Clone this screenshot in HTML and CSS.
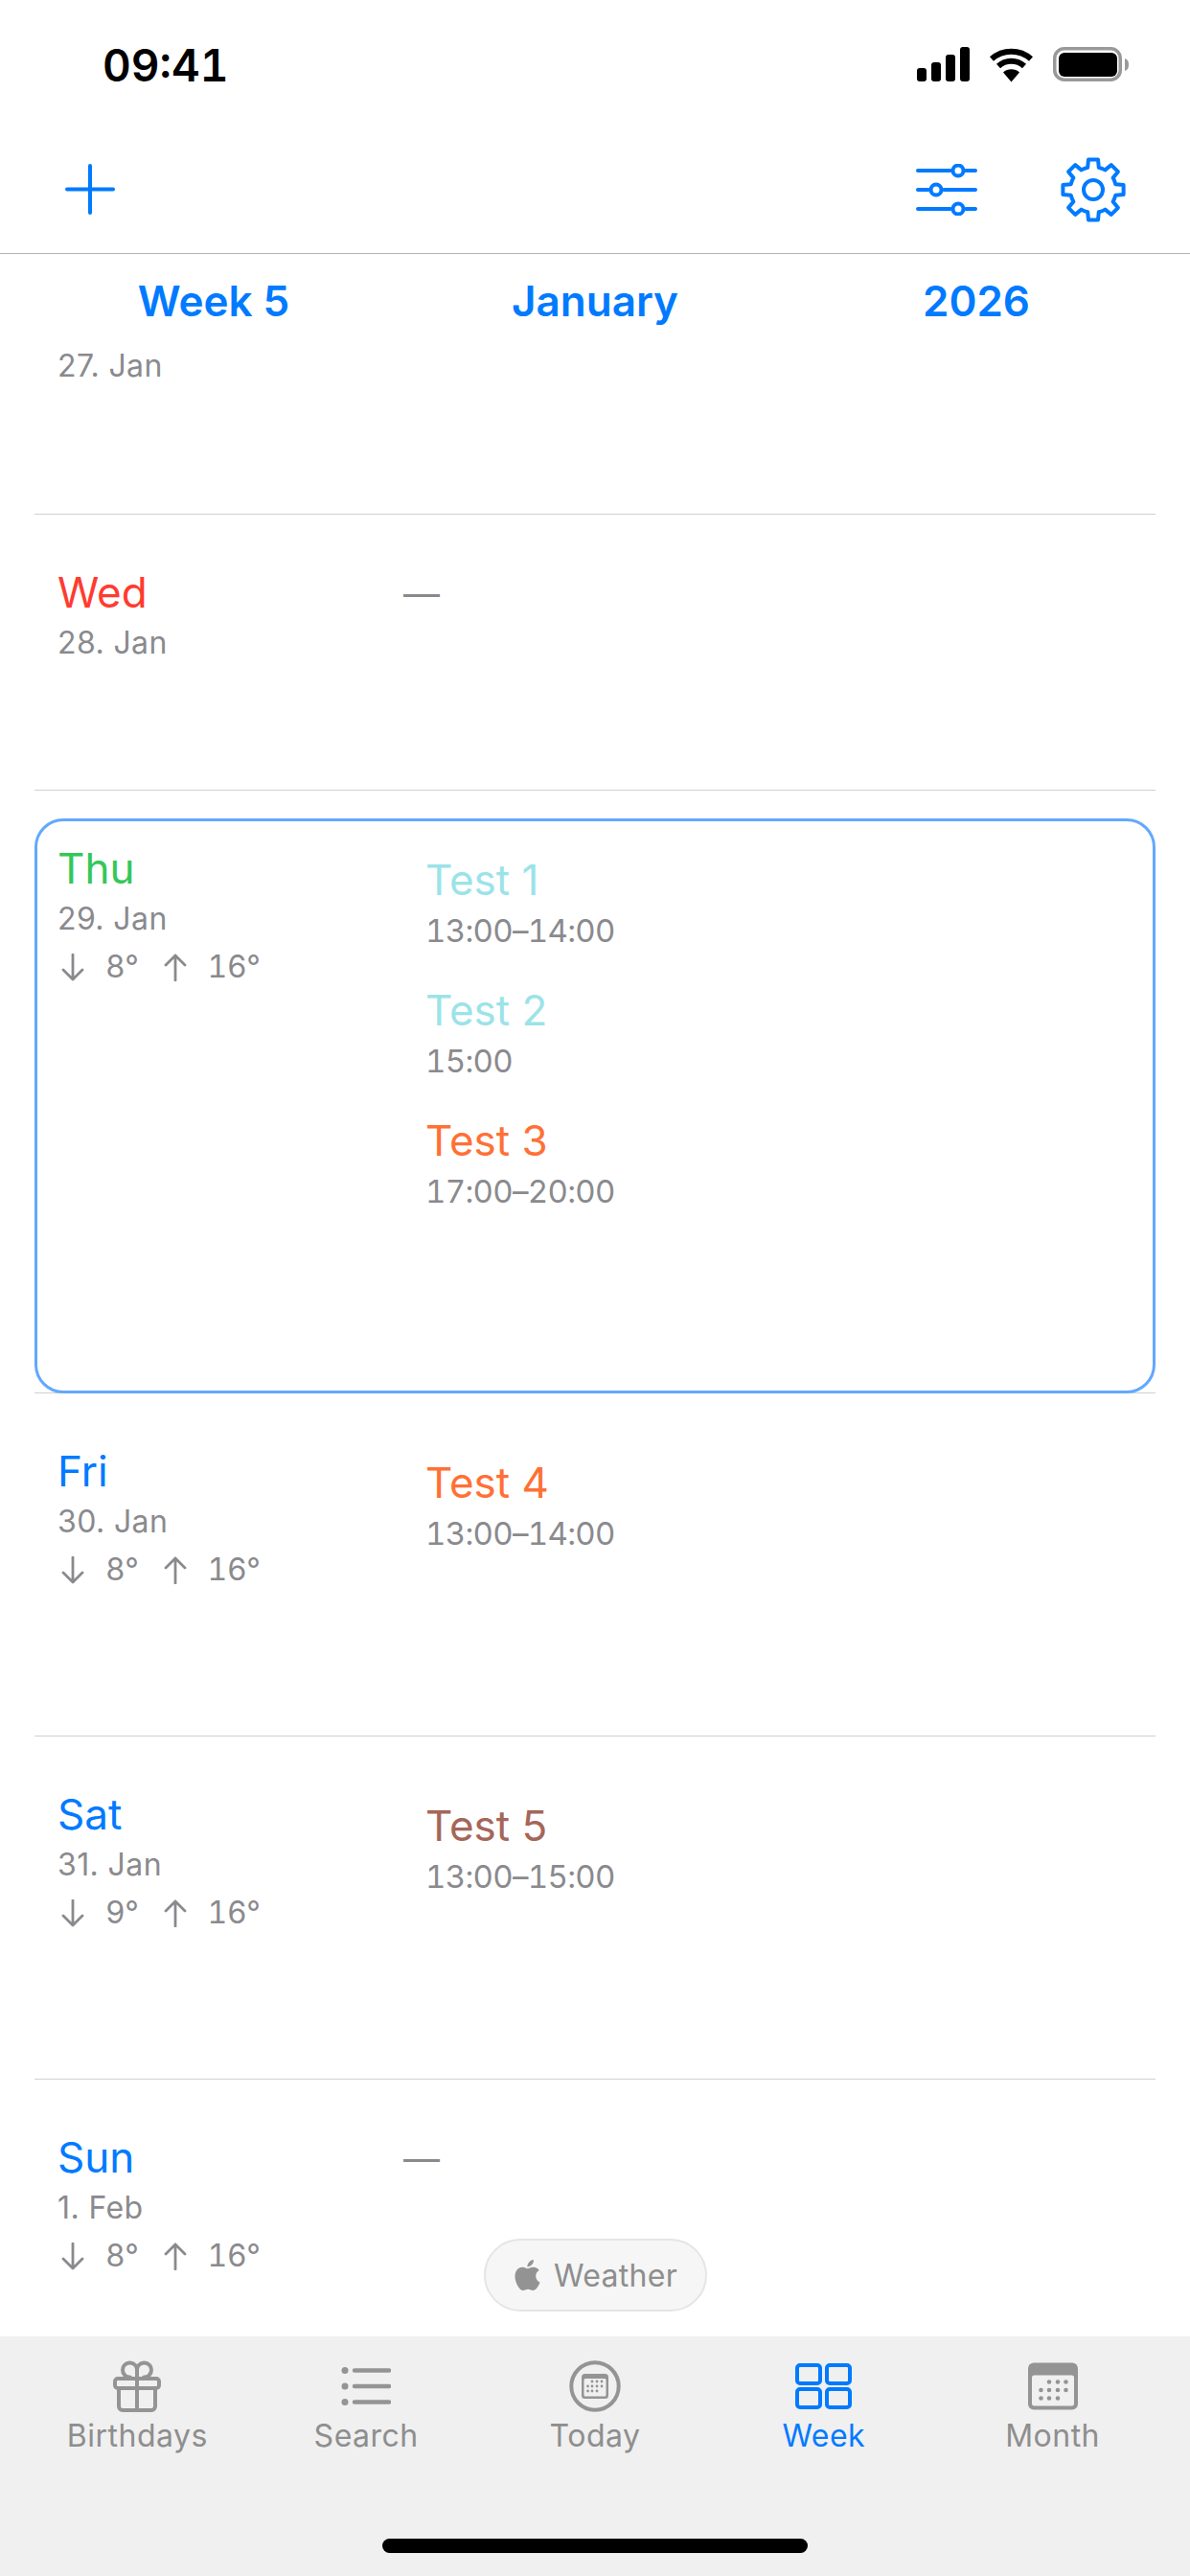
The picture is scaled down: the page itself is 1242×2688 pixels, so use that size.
FILE: index.html
```html
<!DOCTYPE html>
<html lang="en">
<head>
<meta charset="UTF-8">
<meta name="viewport" content="width=device-width, initial-scale=1.0">
<title>Week</title>
<link rel="stylesheet" href="styles.css">
</head>

<body>
<div class="page">

  <div class="status-bar">
    <span class="clock">09:41</span>
    <div class="status-icons">
      <svg width="55" height="36" viewBox="0 0 55 36">
        <rect x="0" y="22" width="10" height="14" rx="3"/>
        <rect x="15" y="16" width="10" height="20" rx="3"/>
        <rect x="30" y="8" width="10" height="28" rx="3"/>
        <rect x="45" y="0" width="10" height="36" rx="3"/>
      </svg>
      <svg width="47" height="37" viewBox="0 0 47 37">
        <path d="M23.5 36.5 L15 26.5 A13 13 0 0 1 32 26.5 Z"/>
        <path class="wifi-arc" d="M10 20 A20 20 0 0 1 37 20"/>
        <path class="wifi-arc" d="M3 12.5 A31 31 0 0 1 44 12.5"/>
      </svg>
      <svg width="79" height="36" viewBox="0 0 79 36">
        <rect x="1.75" y="1.75" width="68.5" height="32.5" rx="10" fill="none" stroke="#999" stroke-width="3.5"/>
        <rect x="6" y="6" width="61" height="25" rx="6"/>
        <path d="M75 12 C78 13 79 15 79 18.5 C79 22 78 24 75 25 Z" fill="#999"/>
      </svg>
    </div>
  </div>

  <div class="nav-bar">
    <svg width="52" height="53" viewBox="0 0 52 53" class="line-icon blue">
      <path d="M2 26.5 H50 M26 2 V51"/>
    </svg>
    <div class="nav-right">
      <svg width="64" height="54" viewBox="0 0 64 54" class="line-icon blue">
        <path d="M2 7 H36 M52 7 H62 M2 27 H13 M29 27 H62 M2 47 H36 M52 47 H62"/>
        <circle cx="44" cy="7" r="5.5"/>
        <circle cx="21" cy="27" r="5.5"/>
        <circle cx="44" cy="47" r="5.5"/>
      </svg>
      <svg width="68" height="68" viewBox="-34 -34 68 68" class="line-icon blue">
        <path d="M-5.8 -23.3 L-5 -31.6 H5 L5.8 -23.3 A24 24 0 0 1 12.4 -20.6 L18.8 -25.9 L25.9 -18.8 L20.6 -12.4 A24 24 0 0 1 23.3 -5.8 L31.6 -5 V5 L23.3 5.8 A24 24 0 0 1 20.6 12.4 L25.9 18.8 L18.8 25.9 L12.4 20.6 A24 24 0 0 1 5.8 23.3 L5 31.6 H-5 L-5.8 23.3 A24 24 0 0 1 -12.4 20.6 L-18.8 25.9 L-25.9 18.8 L-20.6 12.4 A24 24 0 0 1 -23.3 5.8 L-31.6 5 V-5 L-23.3 -5.8 A24 24 0 0 1 -20.6 -12.4 L-25.9 -18.8 L-18.8 -25.9 L-12.4 -20.6 A24 24 0 0 1 -5.8 -23.3 Z"/>
        <circle cx="0" cy="0" r="10"/>
      </svg>
    </div>
  </div>

  <div class="week-list">
    <div class="week-head">
      <span>Week 5</span>
      <span>January</span>
      <span>2026</span>
    </div>

    <div class="day day-first">
      <div class="day-info">
        <div class="day-date">27. Jan</div>
      </div>
    </div>

    <div class="day day-short">
      <div class="day-info">
        <div class="day-name red">Wed</div>
        <div class="day-date">28. Jan</div>
      </div>
      <div class="no-events">—</div>
    </div>

    <div class="day day-today">
      <div class="today-box">
        <div class="day-info">
          <div class="day-name green">Thu</div>
          <div class="day-date">29. Jan</div>
          <div class="temps">
            <svg class="arrow" width="24" height="29" viewBox="0 0 24 29"><path d="M12 1 V27 M2 17 L12 27 L22 17"/></svg>
            <span>8°</span>
            <svg class="arrow" width="24" height="29" viewBox="0 0 24 29"><path d="M12 28 V2 M2 12 L12 2 L22 12"/></svg>
            <span>16°</span>
          </div>
        </div>
        <div class="events">
          <div class="event">
            <div class="event-title cyan">Test 1</div>
            <div class="event-time">13:00–14:00</div>
          </div>
          <div class="event">
            <div class="event-title cyan">Test 2</div>
            <div class="event-time">15:00</div>
          </div>
          <div class="event">
            <div class="event-title orange">Test 3</div>
            <div class="event-time">17:00–20:00</div>
          </div>
        </div>
      </div>
    </div>

    <div class="day">
      <div class="day-info">
        <div class="day-name blue-text">Fri</div>
        <div class="day-date">30. Jan</div>
        <div class="temps">
          <svg class="arrow" width="24" height="29" viewBox="0 0 24 29"><path d="M12 1 V27 M2 17 L12 27 L22 17"/></svg>
          <span>8°</span>
          <svg class="arrow" width="24" height="29" viewBox="0 0 24 29"><path d="M12 28 V2 M2 12 L12 2 L22 12"/></svg>
          <span>16°</span>
        </div>
      </div>
      <div class="events">
        <div class="event">
          <div class="event-title orange">Test 4</div>
          <div class="event-time">13:00–14:00</div>
        </div>
      </div>
    </div>

    <div class="day">
      <div class="day-info">
        <div class="day-name blue-text">Sat</div>
        <div class="day-date">31. Jan</div>
        <div class="temps">
          <svg class="arrow" width="24" height="29" viewBox="0 0 24 29"><path d="M12 1 V27 M2 17 L12 27 L22 17"/></svg>
          <span>9°</span>
          <svg class="arrow" width="24" height="29" viewBox="0 0 24 29"><path d="M12 28 V2 M2 12 L12 2 L22 12"/></svg>
          <span>16°</span>
        </div>
      </div>
      <div class="events">
        <div class="event">
          <div class="event-title brown">Test 5</div>
          <div class="event-time">13:00–15:00</div>
        </div>
      </div>
    </div>

    <div class="day day-last">
      <div class="day-info">
        <div class="day-name blue-text">Sun</div>
        <div class="day-date">1. Feb</div>
        <div class="temps">
          <svg class="arrow" width="24" height="29" viewBox="0 0 24 29"><path d="M12 1 V27 M2 17 L12 27 L22 17"/></svg>
          <span>8°</span>
          <svg class="arrow" width="24" height="29" viewBox="0 0 24 29"><path d="M12 28 V2 M2 12 L12 2 L22 12"/></svg>
          <span>16°</span>
        </div>
      </div>
      <div class="no-events">—</div>
    </div>

    <div class="weather-pill">
      <svg width="27" height="32" viewBox="2 0 20 24" fill="#939393">
        <path d="M12.152 6.896c-.948 0-2.415-1.078-3.96-1.04-2.04.027-3.91 1.183-4.961 3.014-2.117 3.675-.546 9.103 1.519 12.09 1.013 1.454 2.208 3.09 3.792 3.039 1.52-.065 2.09-.987 3.935-.987 1.831 0 2.35.987 3.96.948 1.637-.026 2.676-1.48 3.676-2.948 1.156-1.688 1.636-3.325 1.662-3.415-.039-.013-3.182-1.221-3.22-4.857-.026-3.04 2.48-4.494 2.597-4.559-1.429-2.09-3.623-2.324-4.39-2.376-2-.156-3.675 1.09-4.61 1.09zM15.53 3.83c.843-1.012 1.4-2.427 1.245-3.83-1.207.052-2.662.805-3.532 1.818-.78.896-1.454 2.338-1.273 3.714 1.338.104 2.715-.688 3.559-1.701"/>
      </svg>
      <span>Weather</span>
    </div>
  </div>

  <div class="tab-bar">
    <div class="tabs">
      <div class="tab">
        <svg width="52" height="56" viewBox="0 0 52 56" class="line-icon gray">
          <rect x="3" y="20" width="46" height="10" rx="3"/>
          <path d="M7 30 V49 a4 4 0 0 0 4 4 H41 a4 4 0 0 0 4 -4 V30 M26 20 V53"/>
          <path d="M26 20 V11 A7.5 7.5 0 1 0 18.5 18.5 L20 20 M26 11 A7.5 7.5 0 1 1 33.5 18.5 L32 20"/>
        </svg>
        <span>Birthdays</span>
      </div>
      <div class="tab">
        <svg width="52" height="44" viewBox="0 0 52 44" class="line-icon gray">
          <path class="list-lines" d="M14 5.5 H50 M14 22 H50 M14 38.5 H50"/>
          <circle class="dot" cx="4" cy="5.5" r="3.5"/>
          <circle class="dot" cx="4" cy="22" r="3.5"/>
          <circle class="dot" cx="4" cy="38.5" r="3.5"/>
        </svg>
        <span>Search</span>
      </div>
      <div class="tab">
        <svg width="54" height="54" viewBox="0 0 54 54" class="line-icon gray">
          <circle cx="27" cy="27" r="24.7"/>
          <rect class="solid" x="13" y="14" width="28" height="26" rx="3.5"/>
          <rect class="cal-face" x="15.5" y="19" width="23" height="18.5" rx="1.5"/>
          <g class="dot">
            <circle cx="24" cy="22" r="1.4"/><circle cx="29" cy="22" r="1.4"/><circle cx="34" cy="22" r="1.4"/>
            <circle cx="19.5" cy="27" r="1.4"/><circle cx="24" cy="27" r="1.4"/><circle cx="29" cy="27" r="1.4"/><circle cx="34" cy="27" r="1.4"/>
            <circle cx="19.5" cy="32" r="1.4"/><circle cx="24" cy="32" r="1.4"/><circle cx="29" cy="32" r="1.4"/>
          </g>
        </svg>
        <span>Today</span>
      </div>
      <div class="tab tab-active">
        <svg width="59" height="48" viewBox="0 0 59 48" class="line-icon blue">
          <rect x="2" y="2" width="24" height="19" rx="3"/>
          <rect x="33" y="2" width="24" height="19" rx="3"/>
          <rect x="2" y="27" width="24" height="19" rx="3"/>
          <rect x="33" y="27" width="24" height="19" rx="3"/>
        </svg>
        <span>Week</span>
      </div>
      <div class="tab">
        <svg width="52" height="49" viewBox="0 0 52 49" class="line-icon gray">
          <rect class="solid" x="0" y="0" width="52" height="49" rx="6"/>
          <rect class="cal-face" x="4" y="13" width="44" height="32" rx="2.5"/>
          <g class="dot">
            <circle cx="22" cy="20" r="2.3"/><circle cx="31" cy="20" r="2.3"/><circle cx="39.5" cy="20" r="2.3"/>
            <circle cx="13.5" cy="28.5" r="2.3"/><circle cx="22" cy="28.5" r="2.3"/><circle cx="31" cy="28.5" r="2.3"/><circle cx="39.5" cy="28.5" r="2.3"/>
            <circle cx="13.5" cy="37" r="2.3"/><circle cx="22" cy="37" r="2.3"/><circle cx="31" cy="37" r="2.3"/>
          </g>
        </svg>
        <span>Month</span>
      </div>
    </div>
    <div class="home-bar"></div>
  </div>

</div>
</body>
</html>
```

FILE: styles.css
```css
* {
  box-sizing: border-box;
  margin: 0;
  padding: 0;
}

body {
  font-family: Inter, "Noto Sans", sans-serif;
  background-color: #fff;
}

svg {
  display: block;
}

.page {
  width: 1242px;
  height: 2688px;
  display: flex;
  flex-direction: column;
  overflow: hidden;
}

/* status bar */
.status-bar {
  height: 136px;
  padding: 49px 64px 0 107px;
  display: flex;
  justify-content: space-between;
  align-items: flex-start;
}

.clock {
  font-size: 46px;
  line-height: 38px;
  font-weight: 600;
  font-variant-numeric: tabular-nums;
  color: #000;
}

.status-icons {
  display: flex;
  align-items: flex-start;
  gap: 20px;
}

.wifi-arc {
  fill: none;
  stroke: #000;
  stroke-width: 6;
}

/* nav bar */
.nav-bar {
  height: 129px;
  padding: 0 67px 5px 68px;
  display: flex;
  justify-content: space-between;
  align-items: center;
  border-bottom: 1px solid #b4b4b4;
}

.nav-right {
  display: flex;
  align-items: center;
  gap: 87px;
}

.line-icon {
  fill: none;
  stroke-width: 4;
  stroke-linecap: round;
  stroke-linejoin: round;
}

.line-icon.blue {
  stroke: #007aff;
}

.line-icon.gray {
  stroke: #949494;
}

.line-icon .dot {
  fill: #949494;
  stroke: none;
}

.line-icon .list-lines {
  stroke-width: 4.5;
}

.line-icon .solid {
  fill: #949494;
  stroke: none;
}

.line-icon .cal-face {
  fill: #f0f0f0;
  stroke: none;
}

/* week list */
.week-list {
  flex: 1;
  position: relative;
  overflow: hidden;
  padding: 0 36px;
}

.week-head {
  margin: 0 -12px;
  padding-top: 25px;
  display: grid;
  grid-template-columns: repeat(3, 1fr);
  text-align: center;
  font-size: 44px;
  line-height: 48px;
  font-weight: 600;
  color: #007aff;
}

.day {
  height: 358px;
  padding: 55px 0 0 24px;
  display: flex;
  border-bottom: 1px solid #d0d0d0;
}

.day-first {
  height: 199px;
  padding-top: 17px;
}

.day-short {
  height: 288px;
}

.day-today {
  height: 629px;
  padding: 29px 0 0 0;
}

.day-last {
  height: auto;
  border-bottom: none;
}

.today-box {
  flex: 1;
  height: 600px;
  padding: 23px 0 0 21px;
  display: flex;
  border: 3px solid #62a8ff;
  border-radius: 30px;
}

.day-info {
  width: 384px;
  flex-shrink: 0;
}

.day-name {
  font-size: 44px;
  line-height: 52px;
}

.day-date {
  margin-top: 7px;
  font-size: 32px;
  line-height: 40px;
  letter-spacing: 0.4px;
  color: #8a8a8e;
}

.temps {
  margin-top: 10px;
  display: flex;
  align-items: center;
  gap: 22px;
  font-size: 32px;
  line-height: 40px;
  letter-spacing: -0.4px;
  font-variant-numeric: tabular-nums;
  color: #8a8a8e;
}

.arrow {
  margin-left: 4px;
  fill: none;
  stroke: #8a8a8e;
  stroke-width: 2.8;
  stroke-linecap: round;
  stroke-linejoin: round;
}

.events {
  margin-top: 12px;
  display: flex;
  flex-direction: column;
  gap: 37px;
}

.event-title {
  font-size: 44px;
  line-height: 52px;
}

.event-time {
  margin-top: 7px;
  font-size: 33px;
  line-height: 40px;
  letter-spacing: -0.7px;
  font-variant-numeric: tabular-nums;
  color: #8a8a8e;
}

.no-events {
  margin-left: -23px;
  font-size: 38px;
  line-height: 54px;
  color: #8a8a8e;
}

.red { color: #ff3b30; }
.green { color: #34c759; }
.blue-text { color: #007aff; }
.cyan { color: #9be3e8; }
.orange { color: #ff7035; }
.brown { color: #a5665a; }

/* floats over the list */
.weather-pill {
  position: absolute;
  left: 505px;
  bottom: 26px;
  width: 233px;
  height: 76px;
  padding-left: 30px;
  display: flex;
  align-items: center;
  gap: 14px;
  border: 2px solid #e5e5e5;
  border-radius: 38px;
  background-color: #f6f6f6;
  font-size: 32px;
  letter-spacing: 0.3px;
  color: #8e8e8e;
}

/* tab bar */
.tab-bar {
  height: 250px;
  background-color: #f0f0f0;
}

.tabs {
  padding: 22px 24px 0;
  display: grid;
  grid-template-columns: repeat(5, 1fr);
}

.tab {
  display: flex;
  flex-direction: column;
  align-items: center;
  font-size: 32px;
  letter-spacing: 0.5px;
  color: #8e8e8e;
}

.tab svg {
  height: 60px;
}

.tab span {
  margin-top: 4px;
  line-height: 36px;
}

.tab-active {
  color: #007aff;
}

.home-bar {
  width: 444px;
  height: 15px;
  margin: 89px auto 0;
  border-radius: 8px;
  background-color: #000;
}
```
